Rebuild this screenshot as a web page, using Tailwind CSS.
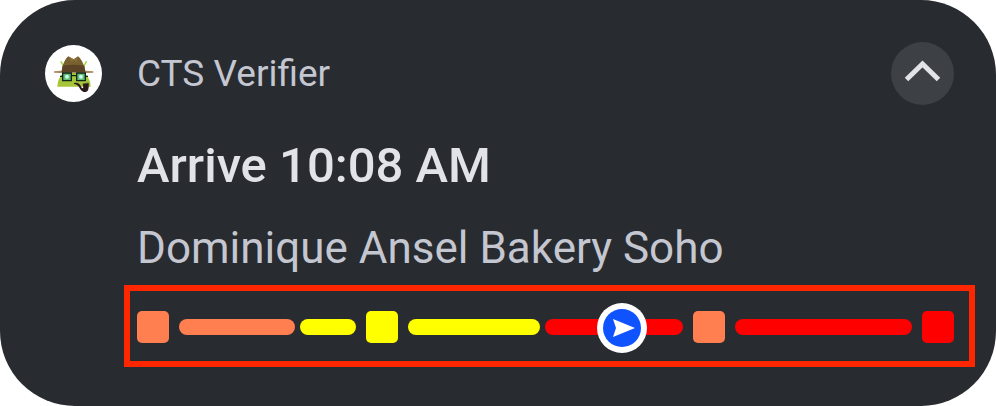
<!DOCTYPE html>
<html lang="en">
<head>
<meta charset="utf-8">
<meta name="viewport" content="width=device-width, initial-scale=1">
<title>CTS Verifier notification</title>
<script src="https://cdn.jsdelivr.net/npm/@tailwindcss/browser@4"></script>
</head>
<body class="bg-white font-['Roboto',sans-serif]">
<article class="flex min-h-screen flex-col rounded-[75px] bg-[#282b30] pt-[42px] pr-[21px] pb-[39px] pl-[45px] text-[#c4c6d0]">
  <header class="flex items-center pr-[21px]">
    <svg class="size-[57px] shrink-0" viewBox="27 27 171 171" aria-hidden="true">
      <circle cx="112.500" cy="112.500" r="85.500" fill="#fff"/>
      <path d="M75 77l8 14M151 77l-8 14" stroke="#a4d42f" stroke-width="4" stroke-linecap="round"/>
      <path d="M64 152c1-27 16-49 49-49s50 22 51 49z" fill="#a6c639"/>
      <path d="M54 106q58-6 118 0v4q-58 4-118 0z" fill="#a88b63"/>
      <path d="M77 108c2-19 8-37 20-47l16 9 13-9c12 10 20 28 22 47z" fill="#79602f"/>
      <path d="M98 62l15 8-5 7zM126 62l-13 8 7 8z" fill="#8d713b"/>
      <path d="M80 89q33-5 65 0l3 19H77z" fill="#5c4325"/>
      <g fill="#62bd72" stroke="#10251b" stroke-width="4">
        <path d="M80 111h26v23H80zM122 111h26v23h-26z"/>
        <path d="M106 119h16M72 121h8M148 121h8" fill="none"/>
      </g>
      <circle cx="93" cy="122" r="6" fill="#c9f8ee"/>
      <circle cx="135" cy="122" r="6" fill="#c9f8ee"/>
      <path d="M114 141q15-3 22 12 3 7 6 1l-2-10 18-3q2 26-9 27-10 1-17-10-7-14-18-14z" fill="#2a181a"/>
      <path d="M140 144l17-3" stroke="#5a3b35" stroke-width="2"/>
    </svg>
    <span class="ml-[35px] text-[37px] leading-[44px]">CTS Verifier</span>
    <button type="button" aria-label="Collapse" class="ml-auto flex size-[63px] shrink-0 items-center justify-center rounded-full bg-[#3d4044]">
      <svg class="size-[63px]" viewBox="0 0 63 63" fill="none" stroke="#e2e2e9" stroke-width="5" aria-hidden="true"><path d="M15.500 37.500l16-15.500 16 15.500"/></svg>
    </button>
  </header>
  <div class="pt-[32px] pl-[92px]">
    <h1 class="text-[49px] leading-[58px] font-medium text-[#e2e2e9]">Arrive 10:08 AM</h1>
    <p class="mt-[27px] text-[44px] leading-[52px]">Dominique Ansel Bakery Soho</p>
  </div>
  <div class="mt-[11px] ml-[79px] flex h-[82px] items-center gap-[10px] border-6 border-[#ff2600] pt-[2px] pr-[15px] pl-[7px]" role="img" aria-label="Route progress">
    <div class="size-8 shrink-0 rounded-[5px] bg-[#ff7f50]"></div>
    <div class="flex h-4 grow-177 basis-0 gap-[5px]">
      <div class="grow-116 basis-0 rounded-full bg-[#ff7f50]"></div>
      <div class="grow-56 basis-0 rounded-full bg-[#ffff00]"></div>
    </div>
    <div class="size-8 shrink-0 rounded-[5px] bg-[#ffff00]"></div>
    <div class="flex h-4 grow-275 basis-0 gap-[5px]">
      <div class="grow-132 basis-0 rounded-full bg-[#ffff00]"></div>
      <div class="relative grow-138 basis-0 rounded-full bg-[#ff0000]">
        <svg class="absolute top-1/2 left-[56%] size-[52px] -translate-x-1/2 -translate-y-1/2" viewBox="0 0 52 52" aria-hidden="true">
          <circle cx="26" cy="27" r="25" fill="#fff"/>
          <circle cx="26" cy="27" r="19" fill="#0f53ff"/>
          <path d="M17 18l22 9-22 9 3-9z" fill="#fff"/>
        </svg>
      </div>
    </div>
    <div class="size-8 shrink-0 rounded-[5px] bg-[#ff7f50]"></div>
    <div class="h-4 grow-177 basis-0 rounded-full bg-[#ff0000]"></div>
    <div class="size-8 shrink-0 rounded-[5px] bg-[#ff0000]"></div>
  </div>
</article>
</body>
</html>
